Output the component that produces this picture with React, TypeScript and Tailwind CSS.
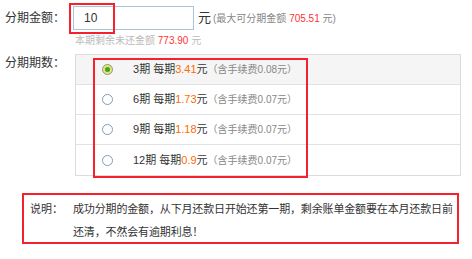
import React from "react"

const options = [
  { n: 3, per: "3.41", fee: "0.08", checked: true },
  { n: 6, per: "1.73", fee: "0.07", checked: false },
  { n: 9, per: "1.18", fee: "0.07", checked: false },
  { n: 12, per: "0.9", fee: "0.07", checked: false },
]

const Radio = ({ checked }: { checked: boolean }) =>
  checked ? (
    <span className="flex h-[11px] w-[11px] items-center justify-center rounded-full border border-[#8a9a8a] bg-[#e9e46a]">
      <span className="h-[5px] w-[5px] rounded-full bg-[#3aa33a]" />
    </span>
  ) : (
    <span className="h-[11px] w-[11px] rounded-full border border-[#7f9db9] bg-white" />
  )

export default function App() {
  return (
    <div
      className="relative h-[259px] w-[472px] overflow-hidden bg-white text-[#333]"
      style={{ fontFamily: '"Liberation Sans", "Noto Sans CJK SC", sans-serif' }}
    >
      {/* amount */}
      <div className="flex items-center pl-[5px] pt-[6px]">
        <span className="w-[68px] text-[12px]">分期金额：</span>
        <div className="flex h-[24px] w-[121px] items-center border border-[#a9c5dd] pl-[10px] text-[12px]">
          10
        </div>
        <span className="ml-[4px] text-[13px]">元</span>
        <span className="ml-[2px] text-[10px] text-[#888]">
          (最大可分期金额 <span className="text-[#f33]">705.51</span> 元)
        </span>
      </div>
      <div className="ml-[75px] mt-[4px] text-[10px] leading-[14px] text-[#bbb]">
        本期剩余未还金额 <span className="text-[#f33]">773.90</span> 元
      </div>

      {/* periods */}
      <div className="mt-[6px] flex pl-[5px]">
        <span className="w-[70px] pt-[1px] text-[12px] leading-[16px]">分期期数：</span>
        <div className="w-[386px] border border-[#dcdcdc]">
          {options.map((o, i) => (
            <div
              key={o.n}
              className={`flex h-[30px] items-center pl-[26px] ${i === 0 ? "bg-[#f5f5f5]" : "bg-white"} ${i < options.length - 1 ? "border-b border-[#e2e2e2]" : ""}`}
            >
              <Radio checked={o.checked} />
              <span className="ml-[20px] text-[11px]">
                {o.n}期 每期<span className="text-[#ff6a00]">{o.per}</span>元
                <span className="text-[10px] text-[#888]">（含手续费{o.fee}元）</span>
              </span>
            </div>
          ))}
        </div>
      </div>

      {/* note */}
      <div className="ml-[22px] mt-[17px] flex h-[51px] w-[437px] border-2 border-[#f5222d] pl-[6px] pt-[3px] text-[11px] leading-[23px]">
        <span className="w-[43px] shrink-0">说明：</span>
        <p className="whitespace-nowrap tracking-[-0.15px]">
          成功分期的金额，从下月还款日开始还第一期，剩余账单金额要在本月还款日前
          <br />
          还清，不然会有逾期利息！
        </p>
      </div>

      {/* annotation boxes */}
      <div className="absolute left-[69px] top-[3px] h-[31px] w-[46px] border-2 border-[#f5222d]" />
      <div className="absolute left-[93px] top-[58px] h-[120px] w-[215px] border-2 border-[#f5222d]" />
    </div>
  )
}
